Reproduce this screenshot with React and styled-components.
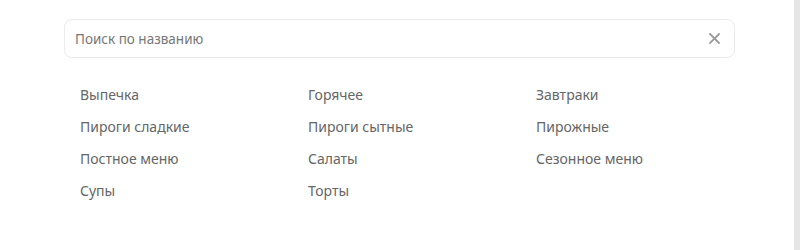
import React from "react";
import styled, { createGlobalStyle } from "styled-components";

const GlobalStyle = createGlobalStyle`
  body {
    margin: 0;
    background: #e6e6e6;
    font-family: "Noto Sans", "Open Sans", sans-serif;
  }
`;

const Panel = styled.div`
  width: 794px;
  height: 250px;
  background: #fff;
  box-sizing: border-box;
  padding: 19px 0 0 64px;
`;

const SearchBox = styled.div`
  width: 671px;
  height: 39px;
  box-sizing: border-box;
  border: 1px solid #ebebeb;
  border-radius: 8px;
  display: flex;
  align-items: center;
  padding: 0 14px 0 10px;
`;

const SearchInput = styled.input`
  flex: 1;
  border: none;
  outline: none;
  background: transparent;
  font-family: inherit;
  font-size: 13.5px;
  color: #333;
  padding: 0;

  &::placeholder {
    color: #777;
  }
`;

const ClearButton = styled.button`
  border: none;
  background: none;
  padding: 0;
  width: 12px;
  height: 12px;
  display: flex;
  align-items: center;
  justify-content: center;
  cursor: pointer;
`;

const Categories = styled.ul`
  list-style: none;
  margin: 0;
  padding: 27px 0 0 16px;
  display: grid;
  grid-template-columns: repeat(3, 228px);
  row-gap: 12px;
`;

const Category = styled.li`
  font-size: 14px;
  line-height: 20px;
  color: #666;
  cursor: pointer;
`;

const categories = [
  "Выпечка",
  "Горячее",
  "Завтраки",
  "Пироги сладкие",
  "Пироги сытные",
  "Пирожные",
  "Постное меню",
  "Салаты",
  "Сезонное меню",
  "Супы",
  "Торты",
];

export default function App() {
  return (
    <>
      <GlobalStyle />
      <Panel>
        <SearchBox>
          <SearchInput placeholder="Поиск по названию" />
          <ClearButton aria-label="Очистить">
            <svg width="11" height="11" viewBox="0 0 11 11">
              <path
                d="M1 1L10 10M10 1L1 10"
                stroke="#999"
                strokeWidth="1.8"
                strokeLinecap="square"
              />
            </svg>
          </ClearButton>
        </SearchBox>
        <Categories>
          {categories.map((c) => (
            <Category key={c}>{c}</Category>
          ))}
        </Categories>
      </Panel>
    </>
  );
}
